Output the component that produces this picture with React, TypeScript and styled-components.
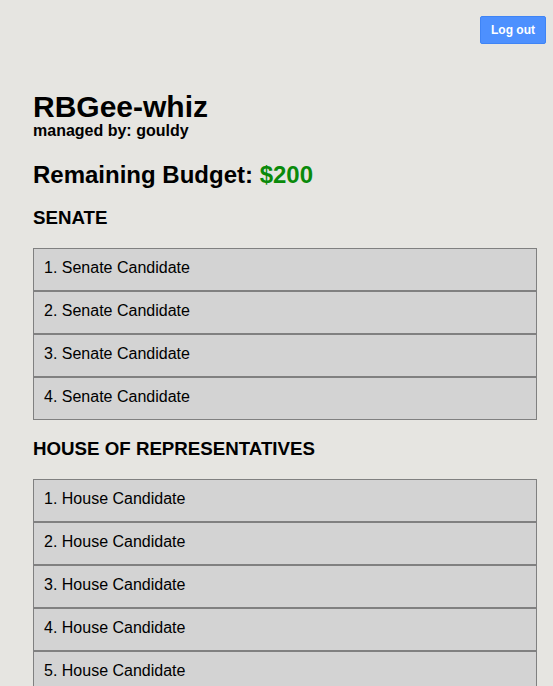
import React from "react";
import styled, { createGlobalStyle } from "styled-components";

const GlobalStyle = createGlobalStyle`
  html, body {
    margin: 0;
    padding: 0;
    background: #e6e5e1;
  }
  body {
    font-family: "Liberation Sans", Arial, Helvetica, sans-serif;
    color: #000;
  }
`;

const Page = styled.div`
  min-height: 686px;
  background: #e6e5e1;
`;

const TopBar = styled.header`
  display: flex;
  justify-content: flex-end;
  padding: 16px 7px 0 0;
`;

const LogoutButton = styled.button`
  font-family: "Liberation Sans", Arial, sans-serif;
  font-size: 12px;
  font-weight: bold;
  line-height: 14px;
  color: #fff;
  background: #4d90fe;
  border: 1px solid #3f84f5;
  border-radius: 2px;
  padding: 6px 10px;
  cursor: pointer;
`;

const Main = styled.main`
  padding: 47px 16px 0 33px;
`;

const Title = styled.h1`
  margin: 0;
  font-size: 30px;
  line-height: 32px;
  font-weight: bold;
`;

const Manager = styled.div`
  font-size: 16px;
  line-height: 16px;
  font-weight: bold;
`;

const Budget = styled.h2`
  margin: 22px 0 0;
  font-size: 24px;
  line-height: 28px;
  font-weight: bold;
`;

const Amount = styled.span`
  color: #0a8a0a;
`;

const Section = styled.section`
  margin-top: 18px;
`;

const SectionTitle = styled.h3`
  margin: 0 0 19px;
  font-size: 18.72px;
  line-height: 22px;
  font-weight: bold;
  text-transform: uppercase;
`;

const List = styled.ol`
  list-style: none;
  margin: 0;
  padding: 0;
`;

const Row = styled.li`
  background: #d3d3d3;
  border: 1px solid #808080;
  padding: 10px 10px 13px;
  font-size: 16px;
  line-height: 18px;
`;

const sections = [
  { name: "Senate", label: "Senate Candidate", count: 4 },
  { name: "House of Representatives", label: "House Candidate", count: 5 },
];

export default function App() {
  return (
    <Page>
      <GlobalStyle />
      <TopBar>
        <LogoutButton>Log out</LogoutButton>
      </TopBar>
      <Main>
        <Title>RBGee-whiz</Title>
        <Manager>managed by: gouldy</Manager>
        <Budget>
          Remaining Budget: <Amount>$200</Amount>
        </Budget>
        {sections.map((s) => (
          <Section key={s.name}>
            <SectionTitle>{s.name}</SectionTitle>
            <List>
              {Array.from({ length: s.count }, (_, i) => (
                <Row key={i}>
                  {i + 1}. {s.label}
                </Row>
              ))}
            </List>
          </Section>
        ))}
      </Main>
    </Page>
  );
}
